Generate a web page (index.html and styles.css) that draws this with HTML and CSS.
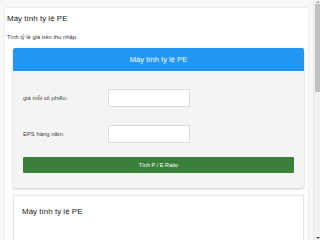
FILE: index.html
```html
<!DOCTYPE html>
<html lang="vi">
<head>
<meta charset="utf-8">
<title>Máy tính tỷ lệ PE</title>
<link rel="stylesheet" href="styles.css">
</head>
<body>
<div class="page">
  <h2 class="page-title">Máy tính tỷ lệ PE</h2>
  <p class="page-desc">Tính tỷ lệ giá trên thu nhập.</p>

  <div class="calc">
    <div class="calc-head">Máy tính tỷ lệ PE</div>
    <div class="calc-body">
      <div class="row">
        <label class="label" for="price">giá mỗi cổ phiếu:</label>
        <input class="field" id="price" type="text">
      </div>
      <div class="row">
        <label class="label" for="eps">EPS hàng năm:</label>
        <input class="field" id="eps" type="text">
      </div>
      <button class="btn" type="button">Tính P / E Ratio</button>
    </div>
  </div>

  <div class="info">
    <h3 class="info-title">Máy tính tỷ lệ PE</h3>
  </div>
</div>

<div class="scrollbar" aria-hidden="true">
  <span class="sb-arrow sb-up"></span>
  <span class="sb-thumb"></span>
  <span class="sb-arrow sb-down"></span>
</div>
</body>
</html>
```

FILE: styles.css
```css
html, body {
  margin: 0;
  padding: 0;
}

html {
  scrollbar-width: none;
}
::-webkit-scrollbar {
  width: 0;
  height: 0;
}

body {
  background: #f8f8f8;
  font-family: "Liberation Sans", Arial, sans-serif;
  color: #222;
}

.page {
  margin: 8px 12px 8px 5px;
  padding: 6px 4px 8px 2px;
  background: #fff;
  box-shadow: 0 0 2px rgba(0, 0, 0, 0.12);
}

.page-title {
  margin: 0;
  font-size: 8px;
  line-height: 10px;
  font-weight: normal;
  color: #222;
}

.page-desc {
  margin: 9px 0 0 0;
  font-size: 5.8px;
  line-height: 8px;
  color: #333;
}

.calc {
  margin: 7px 0 0 6px;
  border-radius: 2px;
  background: #f4f4f4;
  box-shadow: 0 1px 3px rgba(0, 0, 0, 0.22);
  overflow: hidden;
}

.calc-head {
  height: 23px;
  line-height: 23px;
  background: #2196f3;
  color: #fff;
  text-align: center;
  font-size: 7.6px;
}

.calc-body {
  padding: 18px 10px 15px 10px;
}

.row {
  display: grid;
  grid-template-columns: 85px 82px;
  align-items: center;
  margin-bottom: 18px;
}

.row + .row {
  margin-bottom: 14px;
}

.label {
  font-size: 5.9px;
  color: #444;
}

.field {
  box-sizing: border-box;
  height: 18px;
  width: 82px;
  margin: 0;
  border: 1px solid #dcdcdc;
  border-radius: 1px;
  background: #fff;
}

.btn {
  display: block;
  box-sizing: border-box;
  width: 100%;
  height: 16px;
  margin: 0;
  padding: 0;
  border: none;
  border-radius: 1px;
  background: #3a7f3a;
  color: #fff;
  font-family: "Liberation Sans", Arial, sans-serif;
  font-size: 5.6px;
}

.info {
  margin: 7px 0 0 6px;
  padding: 11px 8px;
  min-height: 320px;
  background: #fff;
  border: 1px solid #e4e4e4;
  box-shadow: 0 0 2px rgba(0, 0, 0, 0.08);
}

.info-title {
  margin: 0;
  font-size: 8px;
  line-height: 10px;
  font-weight: normal;
  color: #222;
}

/* page scrollbar, drawn over the right edge */
.scrollbar {
  position: fixed;
  top: 0;
  right: 0;
  width: 7px;
  height: 100%;
  background: #f1f1f1;
  border-left: 1px solid #e8e8e8;
  box-sizing: border-box;
}

.sb-thumb {
  position: absolute;
  top: 4px;
  left: 1px;
  width: 5px;
  height: 88px;
  background: #c1c1c1;
}

.sb-arrow {
  position: absolute;
  left: 1.5px;
  width: 0;
  height: 0;
  border-left: 2px solid transparent;
  border-right: 2px solid transparent;
}

.sb-up {
  top: 1px;
  border-bottom: 2px solid #a3a3a3;
}

.sb-down {
  bottom: 1px;
  border-top: 2px solid #505050;
}
```
